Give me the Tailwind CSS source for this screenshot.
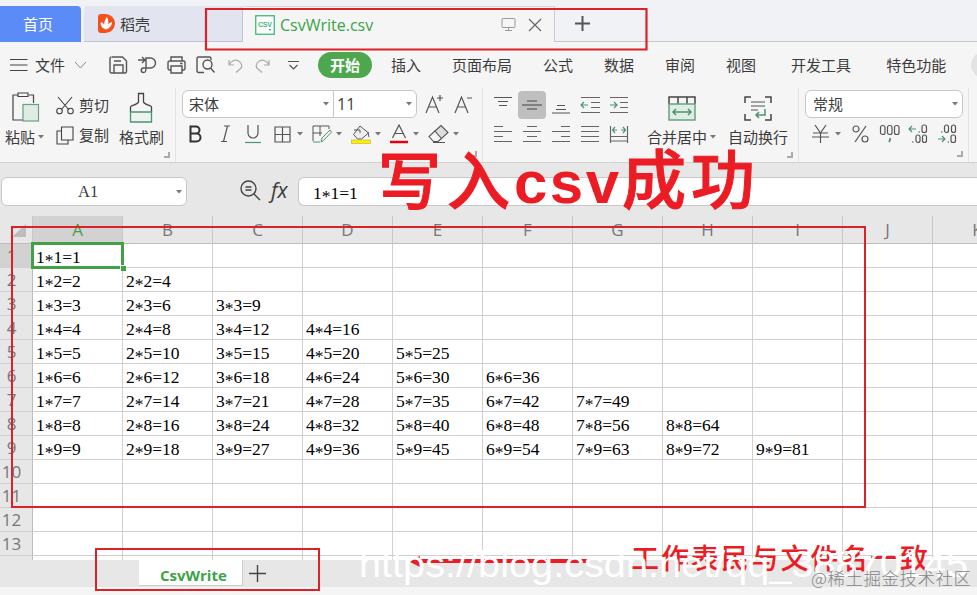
<!DOCTYPE html>
<html lang="zh-CN">
<head>
    <meta charset="UTF-8">
    <meta name="viewport" content="width=device-width, initial-scale=1.0">
    <title>CsvWrite.csv</title>
    <script src="https://cdn.jsdelivr.net/npm/@tailwindcss/browser@4"></script>
</head>
<body class="relative flex h-[595px] w-[977px] flex-col overflow-hidden bg-[#f5f5f5] font-['Open_Sans','Noto_Sans_CJK_SC',sans-serif] text-[15px] leading-5 text-[#3c3c3c]">

    <!-- Document tabs -->
    <div class="flex h-[42px] shrink-0 bg-[#f0f2f6] pt-1.5">
        <div class="flex w-[81px] items-center rounded-tr bg-[#5b8bf7] pl-[23px] text-white">首页</div>
        <div class="ml-[3px] flex w-[159px] items-center rounded-t border-r border-b border-[#c0c4d0] bg-[#e2e5ef] pl-[14px]">
            <svg class="mr-[5px]" width="17" height="19" viewBox="0 0 17 19"><path d="M0 3a3 3 0 0 1 3-3h4.500a9.500 9.500 0 0 1 0 19H3a3 3 0 0 1-3-3z" fill="#f2501f"/><path d="M8 16C5 12 6 7 9 3c2 4 2 9-1 13zM7 15c-3-1-5-4-4-7 3 1 4 4 4 7zM9 15c0-4 2-6 5-7 0 3-2 6-5 7z" fill="#fff"/></svg>
            <span>稻壳</span>
        </div>
        <div class="flex w-[312px] items-center border-t border-r border-[#c9cbd2] border-t-[#d5d5da] bg-[#f5f5f5] pl-[12px]">
            <svg width="20" height="20" viewBox="0 0 20 20" fill="none"><rect x=".75" y=".75" width="18.500" height="18.500" fill="#fff" stroke="#3cb878" stroke-width="1.300"/><text x="3" y="12" font-size="7" font-weight="700" font-family="Liberation Sans" fill="#3cb878" textLength="14">CSV</text><path d="M13.500 14h3l-1.500 2z" fill="#3cb878"/></svg>
            <span class="ml-[5px] w-[221px] text-[16px]"><span class="text-[#3ba446]">CsvWrite.csv</span></span>
            <svg width="15" height="15" viewBox="0 0 15 15" fill="none" stroke="#999"><rect x="1" y="1.500" width="13" height="9" rx="1"/><path d="M7.500 10.500v3M4 13.500h7"/></svg>
            <svg class="ml-3" width="14" height="14" viewBox="0 0 14 14" fill="none" stroke="#666" stroke-width="1.200"><path d="m1 1 12 12M13 1 1 13"/></svg>
        </div>
        <div class="flex grow items-center border-b border-[#c5c8cf] pl-5">
            <svg width="15" height="15" viewBox="0 0 15 15" stroke="#555" stroke-width="2"><path d="M7.500 0v15M0 7.500h15"/></svg>
        </div>
    </div>

    <!-- Menu bar -->
    <div class="flex h-[46px] shrink-0 items-center whitespace-nowrap">
        <svg class="ml-[10px] shrink-0" width="18" height="14" viewBox="0 0 18 14" stroke="#444" stroke-width="1.200"><path d="M0 1.500h17.500M0 7h17.500M0 12.500h17.500"/></svg>
        <span class="ml-[7px]">文件</span>
        <svg class="ml-[9px] shrink-0" width="13" height="8" viewBox="0 0 13 8" fill="none" stroke="#888"><path d="m1 1 5.500 6L12 1"/></svg>
        <div class="ml-[9px] h-7 w-px bg-[#ddd]"></div>
        <svg class="ml-[13px] shrink-0" width="19" height="18" viewBox="0 0 19 18" fill="none" stroke="#555" stroke-width="1.400"><path d="M3 1h10.500L17.500 5v10.500a1.500 1.500 0 0 1-1.500 1.500H2.500A1.500 1.500 0 0 1 1 15.500v-13A1.500 1.500 0 0 1 2.500 1M5 17V9h9v8M5 5h7"/></svg>
        <svg class="ml-[10px] shrink-0" width="19" height="18" viewBox="0 0 19 18" fill="none" stroke="#555" stroke-width="1.400"><path d="M0 4h6.500M4 1l3 3-3 3M8 12V2h4.500a5 5 0 0 1 0 10H5.500a2.200 2.200 0 1 0 0 4.500c2 0 2.500-1 2.500-4.500"/></svg>
        <svg class="ml-[10px] shrink-0" width="19" height="18" viewBox="0 0 19 18" fill="none" stroke="#555" stroke-width="1.400"><path d="M4 5V1h11v4M4 14H2.500A1.500 1.500 0 0 1 1 12.500v-6A1.500 1.500 0 0 1 2.500 5h14A1.500 1.500 0 0 1 18 6.500v6a1.500 1.500 0 0 1-1.500 1.500H15M4 10h11v7H4zM13 7.500h2.500"/></svg>
        <svg class="ml-[10px] shrink-0" width="20" height="18" viewBox="0 0 20 18" fill="none" stroke="#555" stroke-width="1.400"><path d="M8 16.500H2.500A1.500 1.500 0 0 1 1 15V2.500A1.500 1.500 0 0 1 2.500 1h11A1.500 1.500 0 0 1 15 2.500V4M14.500 12l4 4.500"/><circle cx="11.500" cy="8.500" r="4.500"/></svg>
        <svg class="ml-[12px] shrink-0" width="15" height="15" viewBox="0 0 15 15" fill="none" stroke="#aaa" stroke-width="1.200"><path d="M1 2v5h5M1 7c2-4 6-6 9.500-4S15 9 12 11l-4 3.500"/></svg>
        <svg class="ml-[12px] shrink-0" width="15" height="15" viewBox="0 0 15 15" fill="none" stroke="#aaa" stroke-width="1.200"><path d="M14 2v5H9M14 7C12 3 8 1 4.500 3S0 9 3 11l4 3.500"/></svg>
        <svg class="ml-[18px] shrink-0" width="11" height="10" viewBox="0 0 11 10" fill="none" stroke="#555" stroke-width="1.200"><path d="M0 1.500h11M1.500 5l4 4 4-4"/></svg>
        <div class="ml-[11px] h-7 w-px bg-[#ddd]"></div>
        <div class="ml-[8px] flex h-[26px] w-[54px] shrink-0 items-center justify-center rounded-full bg-[#4da74f] font-bold text-white">开始</div>
        <div class="ml-[19px] flex gap-[31px]">
            <span>插入</span><span>页面布局</span><span>公式</span><span>数据</span><span>审阅</span><span>视图</span>
            <span class="ml-1">开发工具</span><span class="ml-1">特色功能</span>
        </div>
        <div class="ml-[25px] size-[26px] shrink-0 rounded-full bg-[#e3e3e3]"></div>
    </div>

    <!-- Ribbon -->
    <div class="flex h-[75px] shrink-0 border-b border-[#d2d2d2] whitespace-nowrap">
        <div class="flex w-[176px] shrink-0 border-r border-[#e2e2e2]">
            <div class="flex w-[50px] flex-col pl-[5px]">
                <svg class="mt-1 ml-[7px]" width="28" height="31" viewBox="0 0 28 31" fill="none" stroke="#444" stroke-width="1.200"><path d="M6 3H1v25h10M17 3h4.500v8M6 1h10v3.500H6z"/><rect x="11" y="12.500" width="15.500" height="16.500" fill="#e0ebe4" stroke="#68a184"/></svg>
                <div class="mt-1 flex items-center">粘贴<svg class="ml-[3px] shrink-0" width="6" height="4"><path d="M0 0h6L3 3.500z" fill="#777"/></svg></div>
            </div>
            <div class="flex w-[59px] flex-col gap-[10px] pt-[7px] pl-1.5">
                <div class="flex items-center gap-[5px]">
                    <svg class="shrink-0" width="18" height="19" viewBox="0 0 18 19" fill="none" stroke="#444" stroke-width="1.100"><path d="m2 1 11 13M16 1 5 14"/><circle cx="3.500" cy="15" r="2.800"/><circle cx="14.500" cy="15" r="2.800"/></svg>剪切</div>
                <div class="flex items-center gap-[5px]">
                    <svg class="shrink-0" width="18" height="19" viewBox="0 0 18 19" fill="none" stroke="#444" stroke-width="1.100"><path d="M5.500 1h11.500v13H5.500zM5.500 5H1v13h11v-4"/></svg>复制</div>
            </div>
            <div class="flex flex-col pl-[10px]">
                <svg class="mt-1 ml-[10px]" width="24" height="31" viewBox="0 0 24 31" fill="none" stroke="#444" stroke-width="1.300"><path d="M1.500 20v-5c0-2 7-2 8-5V1.500h5V10c1 3 8 3 8 5v5"/><path d="M1.500 20h21v10h-21z" fill="#edf4ef" stroke="#4c9470"/></svg>
                <span class="mt-1">格式刷</span>
            </div>
            <svg class="mt-[64px] shrink-0" width="6" height="6" fill="none" stroke="#aaa" stroke-width="2"><path d="M5 0v5H0"/></svg>
        </div>

        <div class="w-[307px] shrink-0 border-r border-[#e2e2e2] pl-[6px]">
            <div class="mt-[2px] flex items-center">
                <div class="flex h-[28px] w-[235px] rounded-md border border-[#c8c8c8] bg-white">
                    <div class="flex w-[151px] items-center justify-between border-r border-[#c8c8c8] pr-1 pl-1.5">宋体<svg width="6" height="4"><path d="M0 0h6L3 3.500z" fill="#777"/></svg></div>
                    <div class="flex grow items-center justify-between pr-1 pl-[3px] text-[16px]">11<svg width="6" height="4"><path d="M0 0h6L3 3.500z" fill="#777"/></svg></div>
                </div>
                <svg class="ml-2" width="20" height="20" viewBox="0 0 20 20" fill="none" stroke="#555" stroke-width="1.200"><path d="m1 19 6.500-16L14 19M3.500 13h8M12 4h6M15 1v6"/></svg>
                <svg class="ml-[9px]" width="20" height="20" viewBox="0 0 20 20" fill="none" stroke="#555" stroke-width="1.200"><path d="m1 19 6.500-16L14 19M3.500 13h8M13 4h5"/></svg>
            </div>
            <div class="mt-[6px] flex items-center pl-[7px]">
                <svg width="14" height="20" viewBox="0 0 14 20" fill="none" stroke="#333" stroke-width="2"><path d="M1.500 2.500v15h6a4 4 0 0 0 0-8h-6 5.500a3.500 3.500 0 0 0 0-7z"/></svg>
                <svg class="ml-[17px]" width="12" height="20" viewBox="0 0 12 20" fill="none" stroke="#555" stroke-width="1.200"><path d="M4 2h6M1 17.500h6M7.500 2l-4 15.500"/></svg>
                <svg class="ml-[12px]" width="18" height="20" viewBox="0 0 18 20" fill="none" stroke="#555" stroke-width="1.200"><path d="M4 1v8a5 5 0 0 0 10 0V1"/><path d="M1 18.500h16" stroke="#4c9470"/></svg>
                <svg class="ml-[12px]" width="17" height="17" viewBox="0 0 17 17" fill="none" stroke="#555" stroke-width="1.200"><path d="M1 1h15v15H1zM8.500 1v15M1 8.500h15"/></svg>
                <svg class="ml-[6px]" width="6" height="4"><path d="M0 0h6L3 3.500z" fill="#777"/></svg>
                <svg class="ml-[9px]" width="20" height="18" viewBox="0 0 20 18" fill="none" stroke="#555"><path d="M17 4V1H1v15M8 1v10M1 8h9"/><path d="M1 17h7M9 17l1-4 8-8 1.500 2-8 8.500z" stroke="#4c9470"/></svg>
                <svg class="ml-[4px]" width="6" height="4"><path d="M0 0h6L3 3.500z" fill="#777"/></svg>
                <svg class="ml-[9px]" width="20" height="20" viewBox="0 0 20 20"><path d="m9 2 8.500 7-7 6h-4l-4-4.500zM3 6h6v3M17 8l1 5" fill="#eee" stroke="#555"/><rect x=".5" y="16" width="19" height="3.500" fill="#ffef00" stroke="#b9b037" stroke-width=".6"/></svg>
                <svg class="ml-[4px]" width="6" height="4"><path d="M0 0h6L3 3.500z" fill="#777"/></svg>
                <svg class="ml-[9px]" width="18" height="20" viewBox="0 0 18 20" fill="none"><path d="M2.500 14 9 1l6.500 13M5 9.500h8" stroke="#555" stroke-width="1.200"/><path d="M0 18h18" stroke="#e60012" stroke-width="2.500"/></svg>
                <svg class="ml-[5px]" width="6" height="4"><path d="M0 0h6L3 3.500z" fill="#777"/></svg>
                <svg class="ml-[9px]" width="21" height="20" viewBox="0 0 21 20" fill="none" stroke="#555" stroke-width="1.100"><path d="m7 7 6-5.500 7 7-6.500 6z" fill="#ddd"/><path d="m7 7-6 5.500 4.500 5h4.500l3.500-3M5 18.500h12"/></svg>
                <svg class="ml-[4px]" width="6" height="4"><path d="M0 0h6L3 3.500z" fill="#777"/></svg>
            </div>
            <svg class="mt-[7px] ml-[289px]" width="6" height="6" fill="none" stroke="#aaa" stroke-width="2"><path d="M5 0v5H0"/></svg>
        </div>

        <div class="flex w-[316px] shrink-0 border-r border-[#e2e2e2] pl-[5px]">
            <div class="grid h-[60px] w-[145px] grid-cols-5 grid-rows-2 place-items-center pt-[2px]">
                <svg width="18" height="18" viewBox="0 0 18 18" fill="none" stroke="#555" stroke-width="1.200"><path d="M0 1.500h18M4 5.500h10M5 9.500h8"/></svg>
                <div class="flex size-7 items-center justify-center rounded bg-[#bfbfbf]"><svg width="20" height="14" viewBox="0 0 20 14" fill="none" stroke="#444" stroke-width="1.200"><path d="M5 3h10M0 7h20M5 11h10"/></svg></div>
                <svg width="18" height="18" viewBox="0 0 18 18" fill="none" stroke="#555" stroke-width="1.200"><path d="M5 9.500h8M4 13.500h10M0 17h18"/></svg>
                <svg width="20" height="18" viewBox="0 0 20 18" fill="none" stroke="#666" stroke-width="1.200"><path d="M1 1.500h19M11 6.500h9M11 11.500h9M1 16.500h19"/><path d="M8 9H1M4 6 1 9l3 3" stroke="#4c9470"/></svg>
                <svg width="20" height="18" viewBox="0 0 20 18" fill="none" stroke="#666" stroke-width="1.200"><path d="M1 1.500h18M11 6.500h8M11 11.500h8M1 16.500h18"/><path d="M1 9h7M5 6l3 3-3 3" stroke="#4c9470"/></svg>
                <svg width="18" height="18" viewBox="0 0 18 18" fill="none" stroke="#666" stroke-width="1.200"><path d="M0 1.500h9M0 6.500h18M0 11.500h9M0 16.500h18"/></svg>
                <svg width="18" height="18" viewBox="0 0 18 18" fill="none" stroke="#666" stroke-width="1.200"><path d="M4 1.500h10M0 6.500h18M4 11.500h10M0 16.500h18"/></svg>
                <svg width="18" height="18" viewBox="0 0 18 18" fill="none" stroke="#666" stroke-width="1.200"><path d="M9 1.500h9M0 6.500h18M9 11.500h9M0 16.500h18"/></svg>
                <svg width="18" height="18" viewBox="0 0 18 18" fill="none" stroke="#666" stroke-width="1.200"><path d="M0 1.500h18M0 6.500h18M0 11.500h18M0 16.500h18"/></svg>
                <svg width="20" height="18" viewBox="0 0 20 18" fill="none" stroke="#666" stroke-width="1.200"><path d="M1.500 1v17M18.500 1v17M2 11.500h16M2 16h16"/><path d="M8 5H3.500M6 2 3.500 5 6 8M12 5h4.500M14 2l2.500 3L14 8" stroke="#4c9470"/></svg>
            </div>
            <div class="ml-[14px] flex w-[70px] flex-col">
                <svg class="mt-[8px] ml-[21px]" width="28" height="25" viewBox="0 0 28 25" fill="none" stroke="#444" stroke-width="1.500"><path d="M1 8V1h26v7M10 1v7M19 1v7"/><path d="M1 8h26v16H1z" fill="#dfeee5" stroke="#68a184"/><path d="M5 16h18M8 13l-3 3 3 3M20 13l3 3-3 3" stroke="#4c9470"/></svg>
                <div class="mt-[6px] flex items-center">合并居中<svg class="ml-[3px] shrink-0" width="6" height="4"><path d="M0 0h6L3 3.500z" fill="#777"/></svg></div>
            </div>
            <div class="ml-[11px] flex w-[60px] flex-col">
                <svg class="mt-[8px] ml-[16px]" width="28" height="25" viewBox="0 0 28 25" fill="none" stroke="#444" stroke-width="1.500"><path d="M1 7V1h6M21 1h6v6M1 18v6h6M21 24h6v-6"/><path d="M7 6h14M7 10h14M7 14h7" stroke="#888"/><path d="M21 13v6h-9M15 16l-3 3 3 3" stroke="#4c9470"/></svg>
                <span class="mt-[6px]">自动换行</span>
            </div>
            <svg class="mt-[64px] -ml-px shrink-0" width="6" height="6" fill="none" stroke="#aaa" stroke-width="2"><path d="M5 0v5H0"/></svg>
        </div>

        <div class="w-[170px] shrink-0 border-r border-[#e2e2e2] pl-[6px]">
            <div class="mt-[2px] flex h-[28px] w-[158px] items-center justify-between rounded-md border border-[#c8c8c8] bg-white pr-1 pl-[7px]">常规<svg width="6" height="4"><path d="M0 0h6L3 3.500z" fill="#777"/></svg></div>
            <div class="mt-[6px] flex items-center pl-[7px]">
                <svg width="17" height="20" viewBox="0 0 17 20" fill="none" stroke="#555" stroke-width="1.200"><path d="m3 1 5.500 8L14 1M1 9h15M0 13h17M8.500 9v10"/></svg>
                <svg class="ml-[6px]" width="6" height="4"><path d="M0 0h6L3 3.500z" fill="#777"/></svg>
                <svg class="ml-[11px]" width="17" height="18" viewBox="0 0 17 18" fill="none" stroke="#555" stroke-width="1.200"><circle cx="4" cy="4" r="3"/><circle cx="13" cy="14" r="3"/><path d="M14 1 3 17"/></svg>
                <svg class="ml-[10px]" width="21" height="20" viewBox="0 0 21 20" fill="none" stroke="#555" stroke-width="1.200"><rect x="1.500" y="1.500" width="4.500" height="9" rx="2"/><rect x="8.500" y="1.500" width="4.500" height="9" rx="2"/><rect x="15.500" y="1.500" width="4.500" height="9" rx="2"/><path d="M11 14v2l-1 2" stroke="#4c9470" stroke-width="1.800"/></svg>
                <svg class="ml-[8px]" width="20" height="20" viewBox="0 0 20 20" fill="none" stroke="#555" stroke-width="1.200"><rect x="14" y="1" width="4.500" height="7.500" rx="2"/><rect x="8" y="11" width="4" height="7.500" rx="2"/><rect x="14.500" y="11" width="4" height="7.500" rx="2"/><path d="M10.500 8h1.500M4 18h1.500"/><path d="M8 5H1M4 2 1 5l3 3" stroke="#4c9470"/></svg>
                <svg class="ml-[9px]" width="20" height="20" viewBox="0 0 20 20" fill="none" stroke="#555" stroke-width="1.200"><rect x="7.500" y="1" width="4" height="7.500" rx="2"/><rect x="14.500" y="1" width="4" height="7.500" rx="2"/><rect x="14" y="11" width="4.500" height="7.500" rx="2"/><path d="M4 8h1.500M10.500 18H12"/><path d="M1 15h7M5 12l3 3-3 3" stroke="#4c9470"/></svg>
            </div>
            <svg class="mt-[7px] ml-[152px]" width="6" height="6" fill="none" stroke="#aaa" stroke-width="2"><path d="M5 0v5H0"/></svg>
        </div>
    </div>

    <!-- Name box and formula input -->
    <div class="flex h-[53px] shrink-0 bg-[#e7e7e7] pt-[14px]">
        <div class="ml-px flex h-[29px] w-[186px] items-center rounded-md border border-[#c8c8c8] bg-white pl-[76px] font-['Liberation_Serif',serif] text-[16.500px]">A1
            <svg class="mr-1 ml-auto" width="6" height="4"><path d="M0 0h6L3 3.500z" fill="#777"/></svg>
        </div>
        <svg class="mt-[3px] ml-[53px]" width="21" height="21" viewBox="0 0 21 21" fill="none" stroke="#444" stroke-width="1.400"><circle cx="8.500" cy="8.500" r="7.500"/><path d="m14 14 6 6M5.500 7h6M5.500 10h6"/></svg>
        <span class="ml-[10px] w-[27px] pt-[3px] font-['Open_Sans',sans-serif] text-[21px] italic">fx</span>
        <div class="h-[29px] grow rounded-l-md border border-r-0 border-[#c8c8c8] bg-white pt-[5px] pl-[14px] font-['Liberation_Serif',serif] text-[17.500px] text-black">1<span class="relative top-[3px]">*</span>1=1</div>
    </div>

    <!-- Sheet -->
    <div class="relative h-[344px] shrink-0 overflow-hidden bg-white">
        <div id="columns" class="flex h-[28px] w-[1023px] border-b border-[#bdbdbd] bg-[#e7e7e7]">
            <div class="flex w-[33px] items-end justify-end border-r border-[#c8c8c8] pr-[6px] pb-[6px]">
                <svg width="14" height="13"><path d="M14 0v13H0z" fill="#bdbdbd"/></svg>
            </div>
        </div>
        <div id="rows" class="w-[1023px]"></div>
        <!-- active cell -->
        <div class="absolute top-[26px] left-[31px] h-[27px] w-[93px] border-[3px] border-[#43a047]">
            <div class="absolute -right-[5px] -bottom-[5px] size-1.5 border-t border-l border-white bg-[#43a047]"></div>
        </div>
    </div>

    <!-- Sheet tabs -->
    <div class="flex h-[27px] shrink-0 bg-[#e7e7e7]">
        <div class="ml-[139px] flex h-[26px] w-[104px] items-center border-r border-b border-[#ccc] bg-white pt-1 pl-[21px] font-bold text-[#3ba446]">CsvWrite</div>
        <svg class="mt-[5px] ml-[6px]" width="17" height="17" viewBox="0 0 17 17" stroke="#444" stroke-width="1.400"><path d="M8.500 0v17M0 8.500h17"/></svg>
    </div>

    <!-- Annotations and watermarks -->
    <svg class="pointer-events-none absolute inset-0" width="977" height="595" viewBox="0 0 977 595" fill="none">
        <g stroke="#dc2229" stroke-width="2">
            <path d="M206 9h440.500v40.500H206z" stroke-width="2.200"/>
            <path d="M12 227h853v280H12z"/>
            <path d="M96 549h223v41H96z"/>
        </g>
        <g fill="#ec1c24" font-family="'Noto Sans CJK SC', sans-serif" font-weight="500">
            <g stroke="#ec1c24" stroke-width="1">
                <text x="378" y="204" font-size="63" textLength="132">写入</text>
                <text x="622" y="203" font-size="64" textLength="133">成功</text>
            </g>
            <text x="514" y="203" font-size="60" font-weight="700" font-family="'Liberation Sans', sans-serif" textLength="105">csv</text>
            <text x="631" y="569" font-size="28" textLength="297">工作表民与文件名一致</text>
            <path d="M410 562c3-2 6-5 10-6v3h168v4H422v5z"/>
        </g>
        <text x="359" y="576.500" font-size="36" fill="#fff" font-family="'Liberation Sans', sans-serif" textLength="609" lengthAdjust="spacingAndGlyphs">https://blog.csdn.net/qq_38870145</text>
        <text x="811" y="585" font-size="17.500" fill="#858585" font-family="'Noto Sans CJK SC', sans-serif" font-weight="300" textLength="160">@稀土掘金技术社区</text>
    </svg>

    <script>
        const columns = document.getElementById('columns');
        const rows = document.getElementById('rows');

        'ABCDEFGHIJK'.split('').forEach((name, i) => {
            const color = i === 0 ? 'bg-[#d2d2d2] text-[#43a047]' : 'text-[#777]';
            columns.innerHTML += `<div class="w-[90px] shrink-0 border-r border-[#c8c8c8] pt-1 text-center text-[17px] ${color}">${name}</div>`;
        });

        // multiplication table: column i holds i*row for i <= row
        for (let r = 1; r <= 14; r++) {
            const head = r === 1 ? 'bg-[#d2d2d2] text-[#43a047]' : 'bg-[#e7e7e7] text-[#777]';
            let html = `<div class="w-[33px] shrink-0 border-r border-b border-[#bdbdbd] border-b-[#d0d0d0] pr-[9px] text-center font-['Open_Sans',sans-serif] text-[17px] leading-6 ${head}">${r}</div>`;
            for (let c = 1; c <= 11; c++) {
                const text = c <= r && r <= 9 ? `${c}<span class="relative top-[3px]">*</span>${r}=${c * r}` : '';
                html += `<div class="w-[90px] shrink-0 border-r border-b border-[#d0d0d0] pl-[3px] text-[17.500px] leading-[27px]">${text}</div>`;
            }
            rows.innerHTML += `<div class="flex h-6 font-['Liberation_Serif',serif] text-black">${html}</div>`;
        }
    </script>
</body>
</html>
